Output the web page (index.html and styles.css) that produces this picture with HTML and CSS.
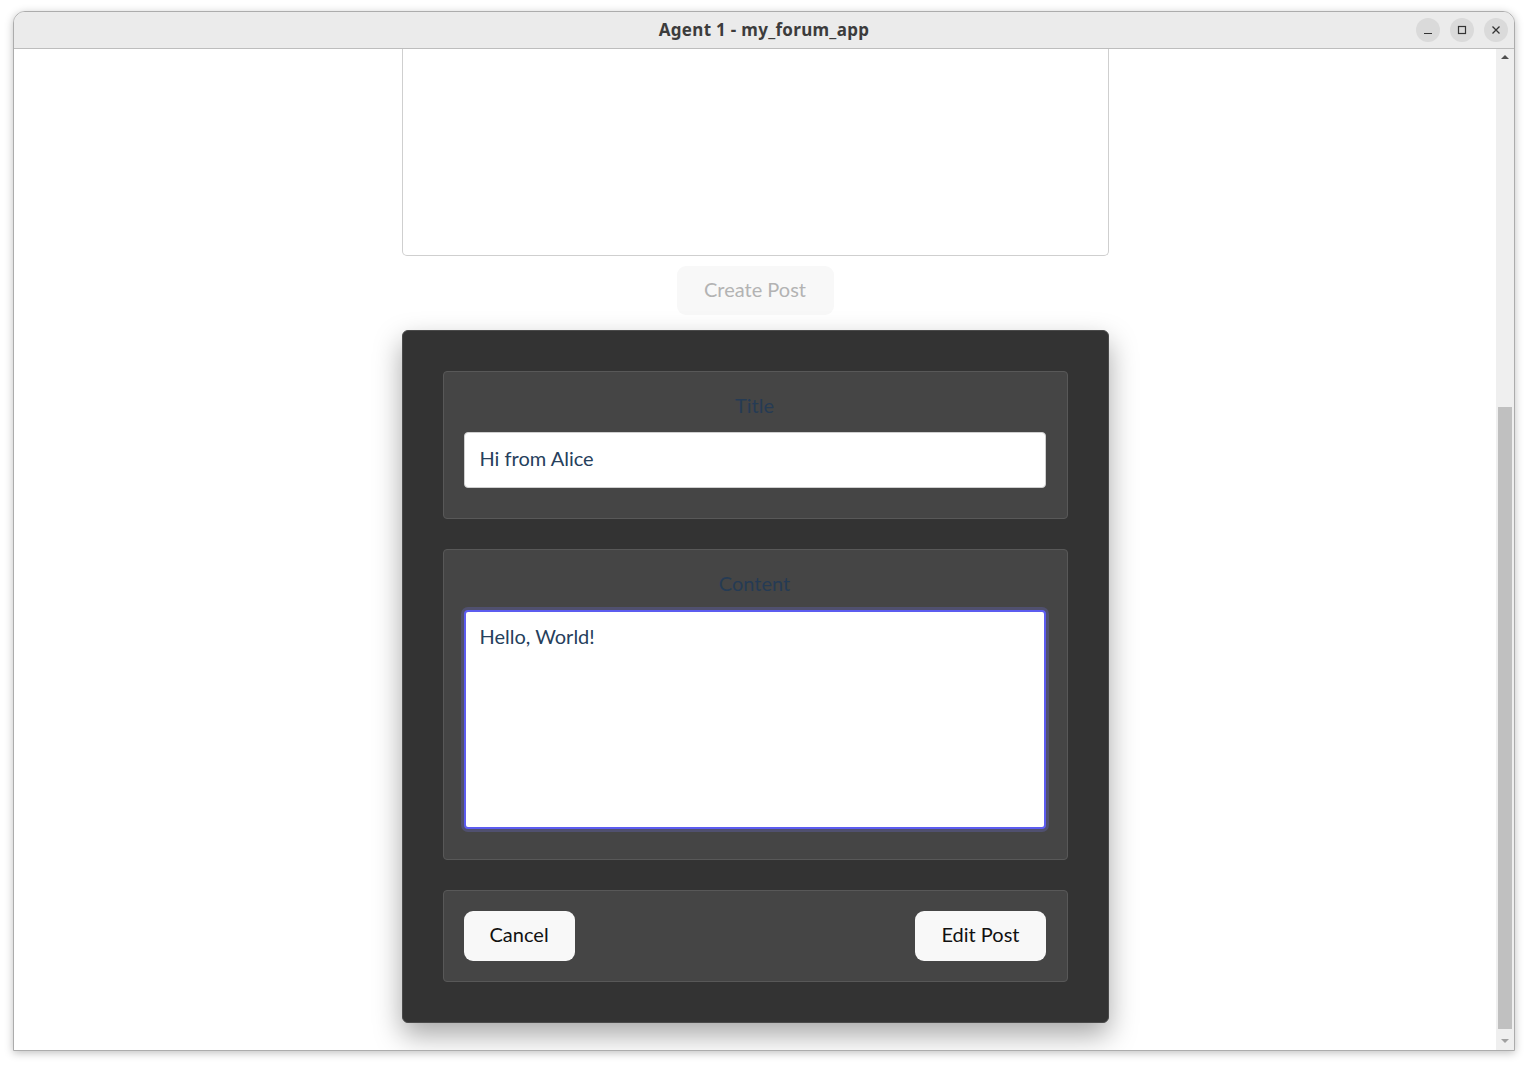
FILE: index.html
```html
<!DOCTYPE html>
<html lang="en">
<head>
<meta charset="utf-8">
<title>Agent 1 - my_forum_app</title>
<link rel="stylesheet" href="styles.css">
</head>
<body>
<div class="window">
  <header class="titlebar">
    <div class="title">Agent 1 - my_forum_app</div>
    <div class="controls">
      <span class="ctl"><svg width="10" height="10" viewBox="0 0 10 10"><path d="M1 8.5h8" stroke="#333" stroke-width="1.2"/></svg></span>
      <span class="ctl"><svg width="10" height="10" viewBox="0 0 10 10"><rect x="1.5" y="1.5" width="7" height="7" fill="none" stroke="#333" stroke-width="1.2"/></svg></span>
      <span class="ctl"><svg width="10" height="10" viewBox="0 0 10 10"><path d="M1.5 1.5l7 7M8.5 1.5l-7 7" stroke="#333" stroke-width="1.3"/></svg></span>
    </div>
  </header>
  <div class="viewport">
    <main class="page">
      <div class="column">
        <div class="new-content"></div>
        <button class="create-btn" disabled>Create Post</button>
        <section class="dialog">
          <div class="group">
            <label class="label">Title</label>
            <div class="input">Hi from Alice</div>
          </div>
          <div class="group">
            <label class="label">Content</label>
            <div class="textarea">Hello, World!</div>
          </div>
          <div class="group actions">
            <button class="btn">Cancel</button>
            <button class="btn">Edit Post</button>
          </div>
        </section>
      </div>
    </main>
    <div class="scrollbar">
      <div class="arrow up"></div>
      <div class="track"><div class="thumb"></div></div>
      <div class="arrow down"></div>
    </div>
  </div>
</div>
</body>
</html>
```
FILE: styles.css
```css
* { box-sizing: border-box; }
html, body { margin: 0; padding: 0; background: #ffffff; }
body {
  width: 1528px;
  height: 1066px;
  padding: 11px 0 0 13px;
  font-family: Lato, "Noto Sans", sans-serif;
  overflow: hidden;
}
.window {
  width: 1502px;
  height: 1040px;
  border: 1px solid #acacac;
  border-radius: 12px 12px 0 0;
  background: #fff;
  box-shadow: 0 2px 8px rgba(0,0,0,0.25);
  display: flex;
  flex-direction: column;
  overflow: hidden;
}
.titlebar {
  height: 37px;
  flex: none;
  background: #ebebeb;
  border-bottom: 1px solid #bdbdbd;
  display: flex;
  align-items: center;
  justify-content: center;
  position: relative;
}
.title {
  font-family: "Noto Sans", sans-serif;
  font-weight: 700;
  font-size: 17px;
  line-height: 20px;
  margin-top: 0;
  color: #3c3c3c;
  letter-spacing: 0.3px;
}
.controls {
  position: absolute;
  right: 6px;
  top: 6px;
  display: flex;
  gap: 10px;
}
.ctl {
  width: 24px;
  height: 24px;
  border-radius: 50%;
  background: #dadada;
  display: flex;
  align-items: center;
  justify-content: center;
}
.viewport {
  flex: 1;
  display: flex;
  min-height: 0;
}
.page {
  flex: 1;
  overflow: hidden;
  background: #fff;
}
.column {
  width: 707px;
  margin: 0 auto;
  display: flex;
  flex-direction: column;
  align-items: center;
}
.new-content {
  width: 707px;
  height: 207px;
  border: 1px solid #cfcfcf;
  border-top: none;
  border-radius: 0 0 5px 5px;
}
.create-btn {
  margin-top: 10px;
  width: 157px;
  height: 49px;
  border: none;
  border-radius: 9px;
  background: #f8f8f8;
  color: #b3b3b3;
  font-family: inherit;
  font-size: 20px;
  padding: 0 0 3px;
}
.dialog {
  margin-top: 15px;
  width: 707px;
  height: 693px;
  background: #333333;
  border: 1px solid #4a4a4a;
  border-radius: 6px;
  box-shadow: 0 12px 28px rgba(0,0,0,0.35);
  padding: 40px;
  display: flex;
  flex-direction: column;
  gap: 30px;
}
.group {
  background: #454545;
  border: 1px solid #585858;
  border-radius: 4px;
  padding: 20px 21px 30px 20px;
  display: flex;
  flex-direction: column;
  align-items: stretch;
}
.label {
  text-align: center;
  color: #253b54;
  font-size: 20px;
  line-height: 26px;
  margin: 0 0 14px;
}
.input {
  height: 56px;
  background: #fff;
  border: 1px solid #cfcfcf;
  border-radius: 4px;
  padding: 0 15px 4px;
  display: flex;
  align-items: center;
  color: #26405c;
  font-size: 20px;
}
.textarea {
  height: 219px;
  background: #fff;
  border: 2px solid #5c5cf0;
  border-radius: 4px;
  box-shadow: 0 0 0 3px #50506f;
  padding: 10px 14px;
  color: #26405c;
  font-size: 20px;
  line-height: 28px;
}
.actions {
  flex-direction: row;
  justify-content: space-between;
  padding: 20px 21px 20px 20px;
}
.btn {
  height: 50px;
  padding: 0 26px 4px;
  border: none;
  border-radius: 9px;
  background: #f8f8f8;
  color: #111;
  font-family: inherit;
  font-size: 20px;
}
.scrollbar {
  width: 18px;
  flex: none;
  background: #efefef;
  display: flex;
  flex-direction: column;
  align-items: center;
}
.arrow { width: 0; height: 0; flex: none; }
.arrow.up {
  margin: 6px 0 0;
  border-left: 4px solid transparent;
  border-right: 4px solid transparent;
  border-bottom: 4px solid #505050;
}
.arrow.down {
  margin: 6px 0 7px;
  border-left: 4px solid transparent;
  border-right: 4px solid transparent;
  border-top: 4px solid #a0a0a0;
}
.track {
  flex: 1;
  width: 100%;
  padding: 348px 2px 4px;
  display: flex;
}
.thumb {
  flex: 1;
  background: #c0c0c0;
}
```
